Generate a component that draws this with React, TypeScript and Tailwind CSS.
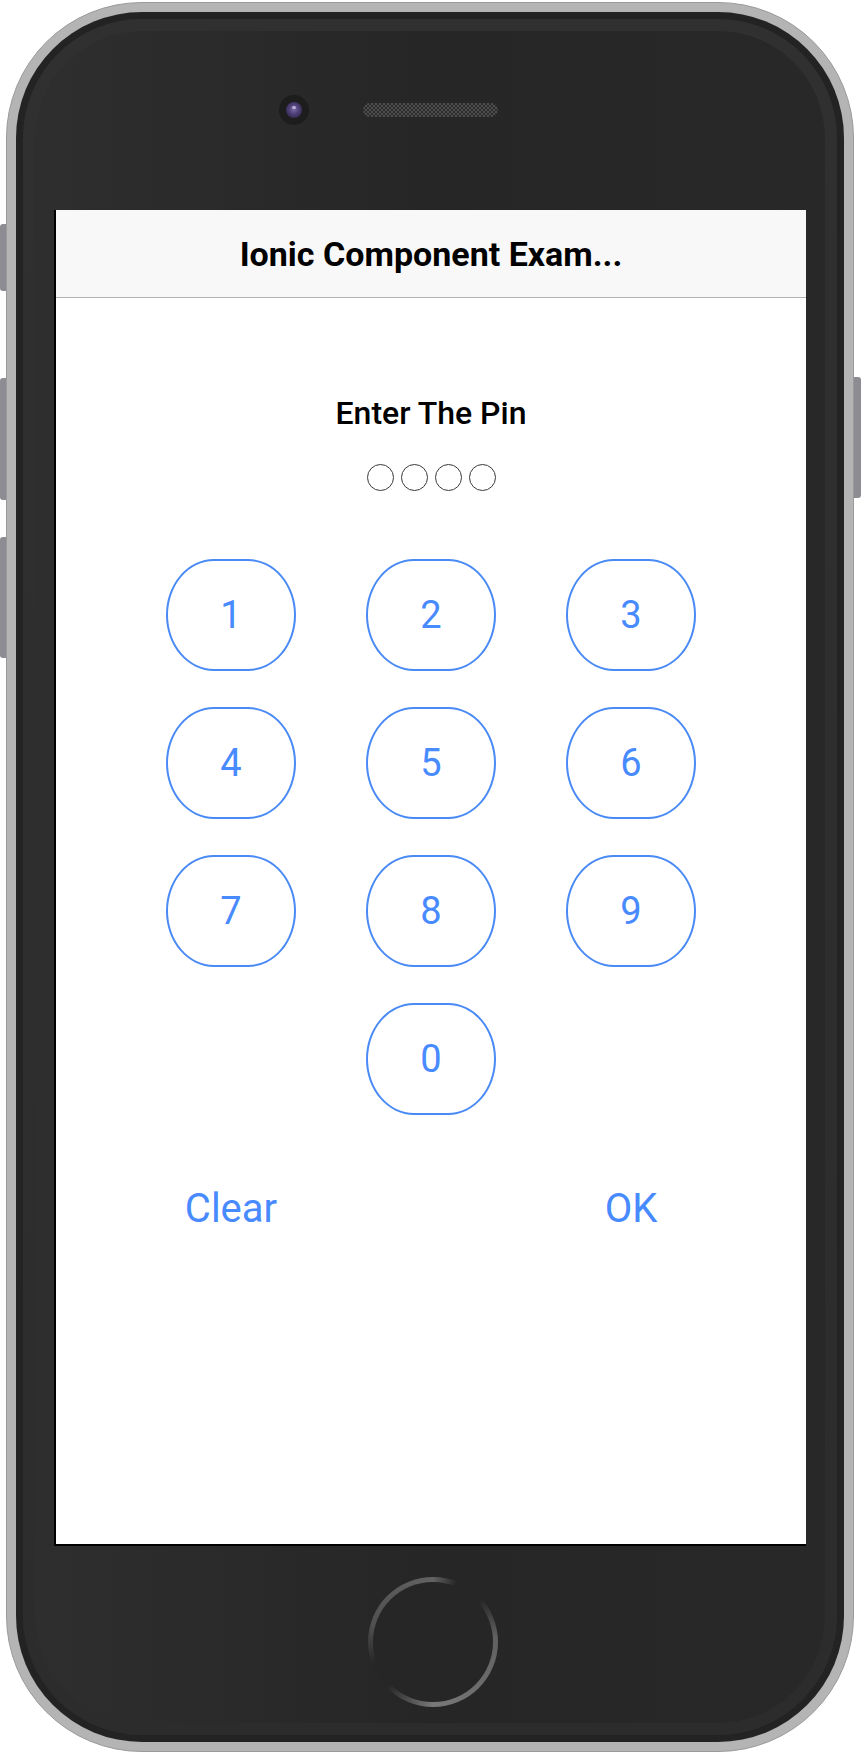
import React from "react";

const keys = ["1", "2", "3", "4", "5", "6", "7", "8", "9"];

const Speaker = () => (
  <svg width="135" height="14" viewBox="0 0 135 14">
    <defs>
      <pattern id="mesh" width="4" height="4" patternUnits="userSpaceOnUse">
        <rect width="4" height="4" fill="#2c2c2c" />
        <rect width="2" height="2" fill="#4e4e4e" />
        <rect x="2" y="2" width="2" height="2" fill="#4e4e4e" />
      </pattern>
    </defs>
    <rect x="0" y="0" width="135" height="14" rx="7" fill="url(#mesh)" />
  </svg>
);

const Camera = () => (
  <div className="w-[30px] h-[30px] rounded-full bg-[#1d1d1d] flex items-center justify-center">
    <div className="w-[16px] h-[16px] rounded-full bg-[radial-gradient(circle_at_50%_45%,#7a6aa8_0%,#4a3d72_45%,#241d38_100%)] flex items-start justify-center">
      <div className="mt-[4px] w-[4px] h-[3px] rounded-full bg-[#b9b0d6]" />
    </div>
  </div>
);

const HomeButton = () => (
  <div className="w-[130px] h-[130px] rounded-full bg-[conic-gradient(#626262_0deg,#262626_22deg,#262626_48deg,#606060_85deg,#787878_180deg,#262626_226deg,#262626_250deg,#505050_285deg,#626262_360deg)] flex items-center justify-center ml-[6px]">
    <div className="w-[120px] h-[120px] rounded-full bg-[#262626]" />
  </div>
);

export default function App() {
  return (
    <div className="relative w-[862px] h-[1754px] bg-white overflow-hidden pl-[6px] pt-[2px] font-['Roboto','Liberation_Sans',sans-serif]">
      {/* side buttons */}
      <div className="absolute left-0 top-[224px] w-[8px] h-[67px] rounded-l-[3px] bg-[#8c8c92]" />
      <div className="absolute left-0 top-[378px] w-[8px] h-[122px] rounded-l-[3px] bg-[#8c8c92]" />
      <div className="absolute left-0 top-[537px] w-[8px] h-[121px] rounded-l-[3px] bg-[#8c8c92]" />
      <div className="absolute left-[853px] top-[377px] w-[8px] h-[121px] rounded-r-[3px] bg-[#8c8c92]" />

      <div className="relative w-[848px] h-[1750px] rounded-[136px] bg-[#b4b4b4] border border-[#9a9a9a] p-[9px]">
        <div className="h-full rounded-[126px] bg-[#232323] p-[7px]">
          <div className="h-full rounded-[119px] bg-gradient-to-b from-[#303030] to-[#2c2c2c] p-[12px]">
            <div className="h-full rounded-[107px] bg-gradient-to-r from-[#2e2e2e] via-[#262626] to-[#282828] flex flex-col items-center">
              {/* top bezel */}
              <div className="w-full h-[179px] pt-[64px] pl-[244px] flex items-start">
                <div className="flex items-center gap-[54px]">
                  <Camera />
                  <Speaker />
                </div>
              </div>

              {/* screen */}
              <div className="w-[752px] h-[1336px] border-l-2 border-b-2 border-black bg-white flex flex-col">
                <div className="h-[88px] bg-[#f8f8f8] border-b border-[#b2b2b2] flex items-center justify-center">
                  <span className="text-[34px] font-bold text-black leading-none">
                    Ionic Component Exam...
                  </span>
                </div>

                <div className="flex flex-col items-center">
                  <div className="mt-[97px] text-[32px] leading-[36px] font-medium text-black">
                    Enter The Pin
                  </div>

                  <div className="mt-[33px] flex gap-[7px]">
                    {[0, 1, 2, 3].map((i) => (
                      <div
                        key={i}
                        className="w-[27px] h-[27px] rounded-full border-[1.5px] border-[#3a3a3a]"
                      />
                    ))}
                  </div>

                  <div className="mt-[68px] grid grid-cols-[130px_130px_130px] gap-x-[70px] gap-y-[36px]">
                    {keys.map((k) => (
                      <button
                        key={k}
                        className="h-[112px] rounded-[48px/56px] border-2 border-[#4a8af5] text-[38px] text-[#488aff] flex items-center justify-center"
                      >
                        {k}
                      </button>
                    ))}
                    <button className="col-start-2 h-[112px] rounded-[48px/56px] border-2 border-[#4a8af5] text-[38px] text-[#488aff] flex items-center justify-center">
                      0
                    </button>
                  </div>

                  <div className="mt-[69px] grid grid-cols-[130px_130px_130px] gap-x-[70px]">
                    <button className="text-[40px] leading-[50px] text-[#488aff] text-center">
                      Clear
                    </button>
                    <div />
                    <button className="text-[40px] leading-[50px] text-[#488aff] text-center">
                      OK
                    </button>
                  </div>
                </div>
              </div>

              {/* bottom bezel */}
              <div className="w-full flex-1 flex justify-center pt-[31px]">
                <HomeButton />
              </div>
            </div>
          </div>
        </div>
      </div>
    </div>
  );
}
